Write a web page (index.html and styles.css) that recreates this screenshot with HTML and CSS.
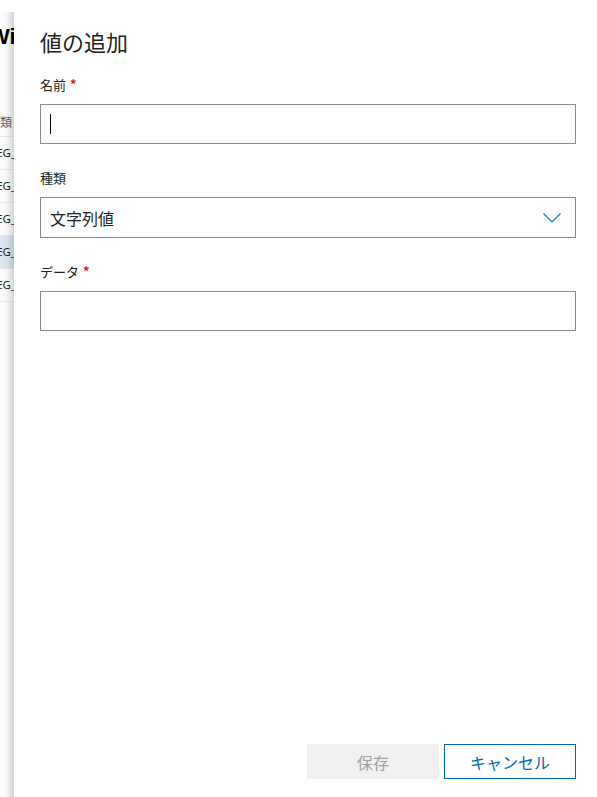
FILE: index.html
```html
<!DOCTYPE html>
<html lang="ja">
<head>
<meta charset="utf-8">
<title>値の追加</title>
<link rel="stylesheet" href="styles.css">
</head>
<body>
<div class="page">
  <div class="backdrop">
    <div class="bg-content">
      <div class="bg-title">Win</div>
      <div class="bg-head">種類</div>
      <div class="bg-row">REG_SZ</div>
      <div class="bg-row">REG_SZ</div>
      <div class="bg-row">REG_SZ</div>
      <div class="bg-row is-selected">REG_SZ</div>
      <div class="bg-row">REG_SZ</div>
    </div>
    <div class="bg-shadow"></div>
  </div>

  <div class="panel">
    <h1 class="panel-title">値の追加</h1>

    <div class="field">
      <div class="field-label">名前<span class="req">*</span></div>
      <div class="textbox"><span class="caret"></span></div>
    </div>

    <div class="field">
      <div class="field-label">種類</div>
      <div class="dropdown">
        <span class="dropdown-text">文字列値</span>
        <svg class="chevron" width="18" height="10" viewBox="0 0 18 10" aria-hidden="true">
          <polyline points="0.5,0.5 9,9 17.5,0.5" fill="none" stroke="#0078d4" stroke-width="1.2"/>
        </svg>
      </div>
    </div>

    <div class="field">
      <div class="field-label">データ<span class="req">*</span></div>
      <div class="textbox"></div>
    </div>

    <div class="footer">
      <button class="btn btn-disabled" disabled>保存</button>
      <button class="btn btn-default">キャンセル</button>
    </div>
  </div>
</div>
</body>
</html>
```

FILE: styles.css
```css
html, body {
  margin: 0;
  padding: 0;
  background: #ffffff;
}

body {
  font-family: "Noto Sans CJK JP", "Noto Sans", sans-serif;
  color: #323130;
}

.page {
  display: flex;
  height: 100vh;
  overflow: hidden;
}

/* ---------- backdrop strip ---------- */
.backdrop {
  flex: 0 0 14px;
  position: relative;
  overflow: hidden;
  background: #ffffff;
}

.bg-content {
  width: 40px;
}

.bg-title {
  padding-top: 23px;
  height: 28px;
  line-height: 28px;
  font-family: "Liberation Sans", Arial, sans-serif;
  font-weight: 700;
  font-size: 22px;
  color: #000000;
  text-indent: -11px;
  white-space: nowrap;
}

.bg-head {
  margin-top: 61px;
  line-height: 20px;
  padding-bottom: 4px;
  border-bottom: 1px solid #edebe9;
  font-size: 12px;
  color: #605e5c;
  text-indent: -12px;
  white-space: nowrap;
}

.bg-row {
  height: 32px;
  line-height: 32px;
  border-bottom: 1px solid #edebe9;
  font-family: "Noto Sans", sans-serif;
  font-size: 11.5px;
  color: #201f1e;
  text-indent: -11px;
  white-space: nowrap;
}

.bg-row.is-selected {
  background: #dfe9f3;
}

.bg-shadow {
  position: absolute;
  top: 12px;
  bottom: 0;
  right: 0;
  width: 14px;
  background: linear-gradient(to right,
    rgba(0, 0, 0, 0) 0%,
    rgba(0, 0, 0, 0.03) 45%,
    rgba(0, 0, 0, 0.17) 100%);
}

/* ---------- panel ---------- */
.panel {
  flex: 1 1 auto;
  display: flex;
  flex-direction: column;
  padding: 26px 21px 18px 26px;
  background: #ffffff;
  min-width: 0;
}

.panel-title {
  margin: 0 0 19px 0;
  font-size: 22px;
  line-height: 30px;
  font-weight: 400;
  color: #201f1e;
}

.field {
  margin-bottom: 24px;
}

.field-label {
  display: flex;
  align-items: flex-start;
  gap: 4px;
  font-size: 13px;
  line-height: 20px;
  margin-bottom: 9px;
  color: #201f1e;
}

.req {
  color: #e81123;
  font-weight: 700;
  font-size: 13px;
  line-height: 18px;
}

.textbox {
  box-sizing: border-box;
  height: 40px;
  border: 1px solid #8a8886;
  display: flex;
  align-items: center;
  padding: 0 9px;
  background: #ffffff;
}

.caret {
  width: 1px;
  height: 20px;
  background: #000000;
}

.dropdown {
  box-sizing: border-box;
  height: 41px;
  border: 1px solid #8a8886;
  display: flex;
  align-items: center;
  justify-content: space-between;
  padding: 0 14px 0 9px;
  background: #ffffff;
}

.dropdown-text {
  font-size: 16px;
  line-height: 22px;
  color: #201f1e;
}

.chevron {
  display: block;
}

/* ---------- footer ---------- */
.footer {
  margin-top: auto;
  display: flex;
  justify-content: flex-end;
  gap: 5px;
}

.btn {
  box-sizing: border-box;
  width: 132px;
  height: 35px;
  font-family: "Noto Sans CJK JP", "Noto Sans", sans-serif;
  font-size: 16px;
  padding: 0;
  border: 1px solid transparent;
  background: #ffffff;
  cursor: pointer;
}

.btn-disabled {
  background: #f1f1f1;
  border-color: #f1f1f1;
  color: #a19f9d;
  cursor: default;
}

.btn-default {
  border-color: #0067b8;
  color: #0067b8;
}
```
